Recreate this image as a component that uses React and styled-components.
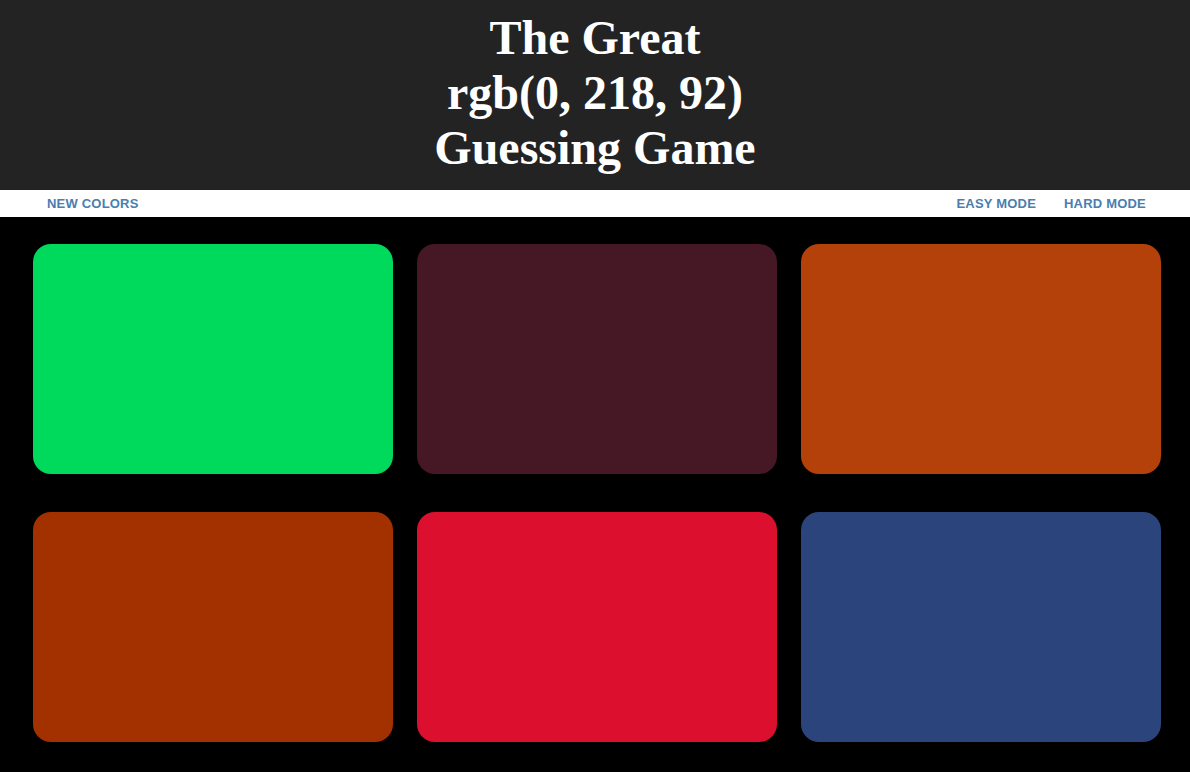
import React from "react";
import styled, { createGlobalStyle } from "styled-components";

const Global = createGlobalStyle`
  html, body { margin: 0; padding: 0; background: #000; }
  body { font-family: "Liberation Sans", Arial, sans-serif; }
`;

const Page = styled.div`
  min-height: 772px;
  background: #000;
`;

const Header = styled.header`
  background: #232323;
  padding: 10px 0 14px;
  height: 190px;
  box-sizing: border-box;
`;

const Title = styled.h1`
  margin: 0;
  text-align: center;
  color: #fff;
  font-family: "Liberation Serif", "Times New Roman", serif;
  font-weight: 700;
  font-size: 48px;
  line-height: 55px;
`;

const Line = styled.span`
  display: block;
`;

const Stripe = styled.nav`
  background: #fff;
  height: 27px;
  display: flex;
  align-items: stretch;
  justify-content: space-between;
  padding: 0 30px 0 33px;
`;

const Group = styled.div`
  display: flex;
  align-items: stretch;
`;

const NavButton = styled.button`
  border: none;
  background: none;
  padding: 0 14px;
  margin: 0;
  font-family: "Liberation Sans", Arial, sans-serif;
  font-weight: 700;
  font-size: 13px;
  letter-spacing: 0.2px;
  text-transform: uppercase;
  color: #4a7eb1;
  cursor: pointer;
  line-height: 27px;
`;

const Grid = styled.main`
  display: grid;
  grid-template-columns: repeat(3, 360px);
  column-gap: 24px;
  row-gap: 38px;
  padding: 27px 29px 30px 33px;
`;

const Square = styled.div`
  height: 230px;
  border-radius: 18px;
  background: ${(p) => p.$color};
`;

const colors = [
  "rgb(0, 218, 92)",
  "#461826",
  "#b4410a",
  "#a33100",
  "#dc0f2f",
  "#2b457c",
];

export default function App() {
  return (
    <Page>
      <Global />
      <Header>
        <Title>
          <Line>The Great</Line>
          <Line>rgb(0, 218, 92)</Line>
          <Line>Guessing Game</Line>
        </Title>
      </Header>
      <Stripe>
        <Group>
          <NavButton>New Colors</NavButton>
        </Group>
        <Group>
          <NavButton>Easy Mode</NavButton>
          <NavButton>Hard Mode</NavButton>
        </Group>
      </Stripe>
      <Grid>
        {colors.map((c, i) => (
          <Square key={i} $color={c} />
        ))}
      </Grid>
    </Page>
  );
}
